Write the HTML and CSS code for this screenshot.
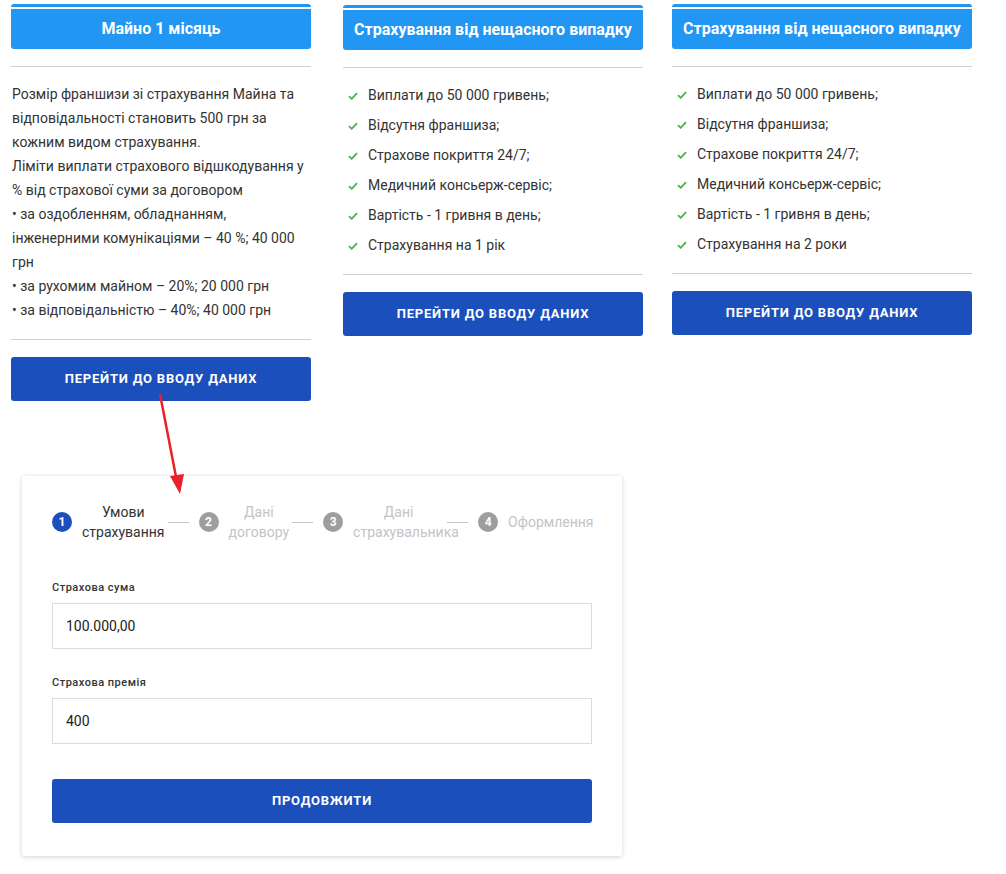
FILE: index.html
```html
<!DOCTYPE html>
<html lang="uk">

<head>
    <meta charset="UTF-8">
    <title>Страхування</title>
    <link rel="stylesheet" href="styles.css">
</head>

<body>
    <div class="plans">
        <div class="plan">
            <div class="plan-head"><div class="plan-title">Майно 1 місяць</div></div>
            <div class="plan-text">
                Розмір франшизи зі страхування Майна та відповідальності становить 500 грн за кожним видом страхування.<br>
                Ліміти виплати страхового відшкодування у % від страхової суми за договором<br>
                • за оздобленням, обладнанням, інженерними комунікаціями – 40 %; 40 000 грн<br>
                • за рухомим майном – 20%; 20 000 грн<br>
                • за відповідальністю – 40%; 40 000 грн
            </div>
            <a href="javascript:;" class="btn">Перейти до вводу даних</a>
        </div>

        <div class="plan plan-mid">
            <div class="plan-head"><div class="plan-title">Страхування від нещасного випадку</div></div>
            <ul class="plan-list">
                <li>Виплати до 50 000 гривень;</li>
                <li>Відсутня франшиза;</li>
                <li>Страхове покриття 24/7;</li>
                <li>Медичний консьерж-сервіс;</li>
                <li>Вартість - 1 гривня в день;</li>
                <li>Страхування на 1 рік</li>
            </ul>
            <a href="javascript:;" class="btn">Перейти до вводу даних</a>
        </div>

        <div class="plan">
            <div class="plan-head"><div class="plan-title">Страхування від нещасного випадку</div></div>
            <ul class="plan-list">
                <li>Виплати до 50 000 гривень;</li>
                <li>Відсутня франшиза;</li>
                <li>Страхове покриття 24/7;</li>
                <li>Медичний консьерж-сервіс;</li>
                <li>Вартість - 1 гривня в день;</li>
                <li>Страхування на 2 роки</li>
            </ul>
            <a href="javascript:;" class="btn">Перейти до вводу даних</a>
        </div>
    </div>

    <div class="form-card">
        <div class="steps">
            <div class="step on">
                <span class="num">1</span>
                <span class="step-name">Умови страхування</span>
                <span class="line"></span>
            </div>
            <div class="step">
                <span class="num">2</span>
                <span class="step-name">Дані договору</span>
                <span class="line"></span>
            </div>
            <div class="step step-wide">
                <span class="num">3</span>
                <span class="step-name">Дані страхувальника</span>
                <span class="line"></span>
            </div>
            <div class="step">
                <span class="num">4</span>
                <span class="step-name">Оформлення</span>
            </div>
        </div>

        <label class="field">
            <span class="field-label">Страхова сума</span>
            <input type="text" value="100.000,00">
        </label>
        <label class="field">
            <span class="field-label">Страхова премія</span>
            <input type="text" value="400">
        </label>

        <a href="javascript:;" class="btn btn-next">Продовжити</a>
    </div>

    <!-- стрілка від кнопки до форми -->
    <svg class="arrow" width="40" height="110" viewBox="0 0 40 110">
        <line x1="10" y1="4" x2="27" y2="92" stroke="#e8212b" stroke-width="2.5"/>
        <polygon points="30,104 20,86 34,84" fill="#e8212b"/>
    </svg>
</body>

</html>
```

FILE: styles.css
```css
* {
    margin: 0;
    padding: 0;
    box-sizing: border-box;
    text-decoration: none;
}

body {
    position: relative;
    font-family: Roboto, "Noto Sans", Arial, sans-serif;
    color: #333;
    background: #fff;
}

.plans {
    display: grid;
    grid-template-columns: 332px 329px 300px;
    align-items: start;
    padding: 4px 0 0 11px;
}

.plan {
    width: 300px;
}

.plan-mid {
    padding-top: 1px;
}

.plan-head {
    border-top: 3px solid #2196f3;
    padding-top: 2px;
    border-radius: 3px 3px 0 0;
}

.plan-title {
    height: 40px;
    line-height: 40px;
    background: #2196f3;
    color: #fff;
    font-size: 16px;
    font-weight: bold;
    text-align: center;
    border-radius: 0 0 3px 3px;
}

.plan-text,
.plan-list {
    margin-top: 17px;
    border-top: 1px solid #d0d0d0;
    border-bottom: 1px solid #d0d0d0;
    font-size: 14px;
}

.plan-text {
    padding: 15px 0 17px 1px;
    line-height: 24px;
}

.plan-list {
    list-style: none;
    padding: 12px 0 14px 0;
    line-height: 30px;
}

.plan-list li {
    padding-left: 25px;
    background: url("data:image/svg+xml,%3Csvg xmlns='http://www.w3.org/2000/svg' width='10' height='8' viewBox='0 0 10 8'%3E%3Cpath d='M1 4.2 3.7 6.8 9 1.2' fill='none' stroke='%234caf50' stroke-width='1.8'/%3E%3C/svg%3E") no-repeat 5px 12px;
}

.btn {
    display: block;
    height: 44px;
    line-height: 44px;
    margin-top: 17px;
    background: #1a4fbc;
    color: #fff;
    border-radius: 3px;
    text-align: center;
    font-size: 13px;
    font-weight: bold;
    letter-spacing: 0.8px;
    text-transform: uppercase;
}

.form-card {
    width: 600px;
    margin: 75px 0 18px 22px;
    padding: 26px 30px 33px;
    background: #fff;
    border-radius: 3px;
    box-shadow: 0 1px 5px rgba(0, 0, 0, 0.18);
}

.steps {
    display: flex;
    align-items: center;
    height: 40px;
    margin-bottom: 39px;
}

.step {
    display: flex;
    align-items: center;
}

.num {
    width: 20px;
    height: 20px;
    border-radius: 50%;
    background: #9e9e9e;
    color: #fff;
    font-size: 12px;
    font-weight: bold;
    line-height: 20px;
    text-align: center;
    margin-right: 10px;
}

.step.on .num {
    background: #1a4fbc;
}

.step-name {
    width: min-content;
    font-size: 14px;
    line-height: 20px;
    text-align: center;
    color: #c4c4c4;
}

.step.on .step-name {
    color: #333;
}

.step-wide .step-name {
    width: 91px;
}

.line {
    width: 21px;
    height: 1px;
    background: #c4c4c4;
    margin: 0 10px 0 3px;
}

.field {
    display: block;
    margin-bottom: 27px;
}

.field-label {
    display: block;
    font-size: 11px;
    font-weight: 500;
    letter-spacing: 0.5px;
    line-height: 14px;
    margin-bottom: 8px;
}

.field input {
    display: block;
    width: 100%;
    height: 46px;
    padding: 0 13px;
    border: 1px solid #dcdcdc;
    font-family: inherit;
    font-size: 14px;
    color: #222;
    outline: none;
}

.btn-next {
    margin-top: 35px;
}

.arrow {
    position: absolute;
    left: 150px;
    top: 390px;
}
```
